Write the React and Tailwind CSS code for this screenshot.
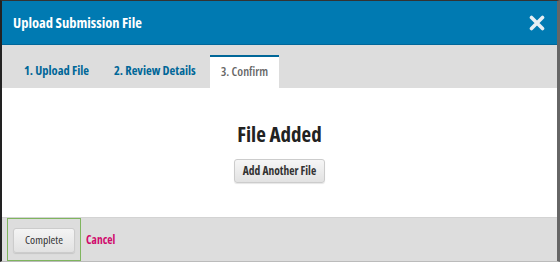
export default function App() {
  return (
    <div className="w-[560px] h-[262px] bg-white overflow-hidden font-['Open_Sans',sans-serif] font-stretch-condensed">
      <div className="flex h-full flex-col border-l-2 border-r-[3px] border-t border-b border-l-[#222] border-r-[#666] border-t-[#333] border-b-[#bbb]">
        {/* header */}
        <div className="flex h-[44px] shrink-0 items-center justify-between border-b border-[#00679a] bg-[#007ab2] pl-[11px] pr-[12px]">
          <h1 className="text-[14.5px] font-bold text-white">Upload Submission File</h1>
          <svg width="16" height="16" viewBox="0 0 16 16">
            <path d="M2.5 2.5 L13.5 13.5 M13.5 2.5 L2.5 13.5" stroke="#e6eef3" strokeWidth="3.6" strokeLinecap="round" />
          </svg>
        </div>

        {/* tabs */}
        <div className="flex h-[43px] shrink-0 items-end gap-[3px] bg-[#ddd] pl-[11px]">
          <div className="flex h-[33px] items-center px-[11px] text-[12.5px] font-bold text-[#006798]">1. Upload File</div>
          <div className="flex h-[33px] items-center px-[11px] text-[12.5px] font-bold text-[#006798]">2. Review Details</div>
          <div className="flex h-[33px] items-center border-t-2 border-[#006798] bg-white px-[11px] text-[12.5px] font-semibold text-[#666]">
            3. Confirm
          </div>
        </div>

        {/* body */}
        <div className="flex flex-1 flex-col items-center pt-[31px]">
          <h2 className="text-[21px] font-bold leading-[31px] text-[#222]">File Added</h2>
          <button className="mt-[9px] h-[24px] rounded-[3px] border border-[#ccc] bg-gradient-to-b from-[#f6f6f6] to-[#e2e2e2] px-[8px] text-[11.5px] font-bold text-[#333] shadow-[0_1px_1px_rgba(0,0,0,0.1)]">
            Add Another File
          </button>
        </div>

        {/* footer */}
        <div className="flex h-[44px] shrink-0 items-stretch border-t border-[#d3d3d3] bg-[#ddd] pl-[5px]">
          <div className="flex items-center border border-[#7fb55e] px-[5px] pt-[1px]">
            <button className="h-[25px] w-[62px] rounded-[3px] border border-[#ccc] bg-gradient-to-b from-[#f4f4f4] to-[#e2e2e2] text-[11.5px] text-[#333] shadow-[0_1px_1px_rgba(0,0,0,0.1)]">
              Complete
            </button>
          </div>
          <div className="flex items-center pl-[5px] pt-[1px] text-[11.5px] font-bold text-[#d00a6c]">Cancel</div>
        </div>
      </div>
    </div>
  );
}
